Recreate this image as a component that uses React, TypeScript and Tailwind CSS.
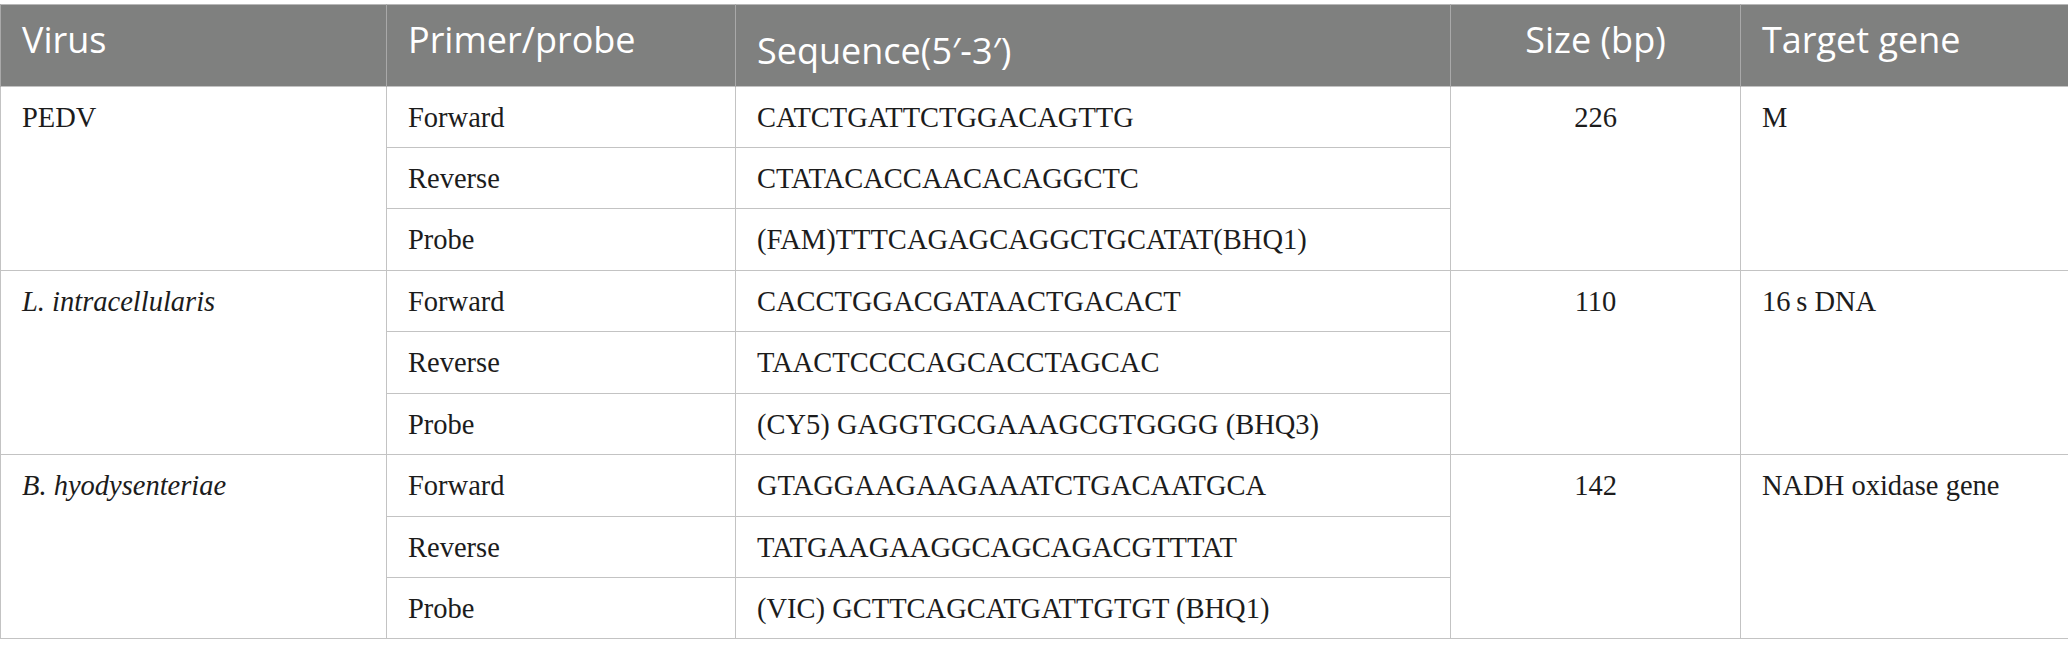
import React from "react";

const serif = "font-['Liberation_Serif','Times_New_Roman',serif]";

type Row = { virus: string; italic: boolean; size: string; gene: string; seqs: [string, string][] };

const rows: Row[] = [
  {
    virus: "PEDV",
    italic: false,
    size: "226",
    gene: "M",
    seqs: [
      ["Forward", "CATCTGATTCTGGACAGTTG"],
      ["Reverse", "CTATACACCAACACAGGCTC"],
      ["Probe", "(FAM)TTTCAGAGCAGGCTGCATAT(BHQ1)"],
    ],
  },
  {
    virus: "L. intracellularis",
    italic: true,
    size: "110",
    gene: "16\u2009s DNA",
    seqs: [
      ["Forward", "CACCTGGACGATAACTGACACT"],
      ["Reverse", "TAACTCCCCAGCACCTAGCAC"],
      ["Probe", "(CY5) GAGGTGCGAAAGCGTGGGG (BHQ3)"],
    ],
  },
  {
    virus: "B. hyodysenteriae",
    italic: true,
    size: "142",
    gene: "NADH oxidase gene",
    seqs: [
      ["Forward", "GTAGGAAGAAGAAATCTGACAATGCA"],
      ["Reverse", "TATGAAGAAGGCAGCAGACGTTTAT"],
      ["Probe", "(VIC) GCTTCAGCATGATTGTGT (BHQ1)"],
    ],
  },
];

const rowHeights = [61, 61, 62, 61, 62, 61, 62, 61, 61];

export default function App() {
  const cell = "border border-[#c3c3c3] align-top px-[21px] pt-[15px] text-[28.5px] leading-[32px] text-[#1c1c1c] " + serif;
  const head =
    "border-x border-[#a9a9a9] align-top px-[21px] text-left text-white font-normal text-[36px] leading-[49px] font-['Open_Sans','Noto_Sans',sans-serif]";
  return (
    <div className="w-[2068px] h-[657px] bg-white pt-[4px]">
      <table className="w-[2068px] table-fixed border-collapse border border-[#c3c3c3]">
        <colgroup>
          <col className="w-[386px]" />
          <col className="w-[349px]" />
          <col className="w-[715px]" />
          <col className="w-[290px]" />
          <col className="w-[328px]" />
        </colgroup>
        <thead>
          <tr className="h-[82px] bg-[#7f807f] border-t border-[#b8b8b8]">
            <th className={head + " pt-[10px]"}>Virus</th>
            <th className={head + " pt-[10px]"}>Primer/probe</th>
            <th className={head + " pt-[21px]"}>Sequence(5′-3′)</th>
            <th className={head + " pt-[10px] !text-center"}>Size (bp)</th>
            <th className={head + " pt-[10px]"}>Target gene</th>
          </tr>
        </thead>
        <tbody>
          {rows.map((g, gi) =>
            g.seqs.map(([p, s], si) => (
              <tr key={gi + "-" + si} style={{ height: rowHeights[gi * 3 + si] }}>
                {si === 0 && (
                  <td rowSpan={3} className={cell + (g.italic ? " italic" : "")}>
                    {g.virus}
                  </td>
                )}
                <td className={cell}>{p}</td>
                <td className={cell}>{s}</td>
                {si === 0 && (
                  <td rowSpan={3} className={cell + " text-center"}>
                    {g.size}
                  </td>
                )}
                {si === 0 && (
                  <td rowSpan={3} className={cell}>
                    {g.gene}
                  </td>
                )}
              </tr>
            ))
          )}
        </tbody>
      </table>
    </div>
  );
}
